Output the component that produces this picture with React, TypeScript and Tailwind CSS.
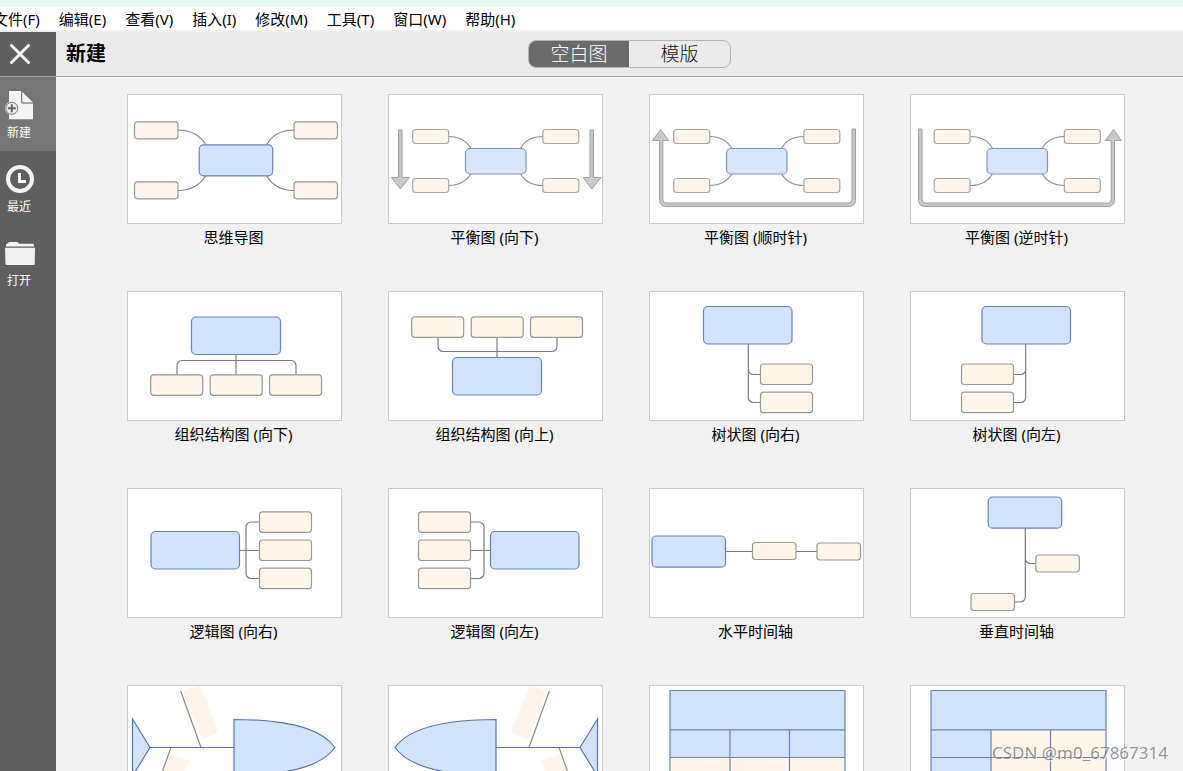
import { useState } from "react";
import type { ReactNode } from "react";

const menus = ["文件(F)", "编辑(E)", "查看(V)", "插入(I)", "修改(M)", "工具(T)", "窗口(W)", "帮助(H)"];

interface BoxProps {
  x: number;
  y: number;
  w?: number;
  h?: number;
}

// central topic
function Root({ x, y, w = 89, h = 38 }: BoxProps) {
  return <rect x={x} y={y} width={w} height={h} rx="4.500" fill="#d2e3fe" stroke="#6484bb" strokeWidth="1.200" />;
}

// sub topic
function Leaf({ x, y, w = 52, h = 20.5 }: BoxProps) {
  return <rect x={x} y={y} width={w} height={h} rx="3" fill="#fff5e8" stroke="#9a9894" strokeWidth="1.200" />;
}

function Wire({ d }: { d: string }) {
  return <path d={d} fill="none" stroke="#7c7c7c" strokeWidth="1.200" />;
}

function Flip({ children }: { children: ReactNode }) {
  return <g transform="translate(215 0) scale(-1 1)">{children}</g>;
}

function MindMap() {
  return (
    <>
      <Wire d="M51 36C64 36 73 41 79 51M167 36C154 36 145 41 139.500 51M51 96.500C64 96.500 73 91 79 81.500M167 96.500C154 96.500 145 91 139.500 81.500" />
      <Root x={72.2} y={50.800} w={73.5} h={31} />
      <Leaf x={7.5} y={27.800} w={43.5} h={17} />
      <Leaf x={167} y={27.800} w={43.5} h={17} />
      <Leaf x={7.5} y={87.800} w={43.5} h={17} />
      <Leaf x={167} y={87.800} w={43.5} h={17} />
    </>
  );
}

function BalancedNodes() {
  return (
    <g opacity="0.85">
      <Wire d="M60.500 42.500C71 42.500 78 46 83 54.500M155 42.500C144 42.500 137 46 132.500 54.500M60.500 91.500C71 91.500 78 88 83 79.500M155 91.500C144 91.500 137 88 132.500 79.500" />
      <Root x={77.5} y={54.5} w={60.5} h={25.500} />
      <Leaf x={24.700} y={35.5} w={36} h={14} />
      <Leaf x={154.800} y={35.5} w={36} h={14} />
      <Leaf x={24.700} y={84.5} w={36} h={14} />
      <Leaf x={154.800} y={84.5} w={36} h={14} />
    </g>
  );
}

function BalancedDown() {
  return (
    <>
      <BalancedNodes />
      <g fill="#c9c9c9" stroke="#a0a0a0">
        <path d="M10.500 36h3.500v47.500h7.500L12.300 95 3.500 83.500h7z" />
        <path d="M202 36h3.500v47.500h7.500L203.800 95 195 83.500h7z" />
      </g>
    </>
  );
}

function BalancedClockwise() {
  return (
    <>
      <BalancedNodes />
      <path
        d="M203 35h3.500v71.500a6 6 0 0 1-6 6h-184a6 6 0 0 1-6-6V46.500H3.500L11.600 35.500 19.800 46.500h-6v59a3.500 3.500 0 0 0 3.500 3.500h182.200a3.500 3.500 0 0 0 3.500-3.500z"
        fill="#c9c9c9"
        stroke="#a0a0a0"
      />
    </>
  );
}

function OrgDown() {
  return (
    <>
      <Wire d="M109 63.500V83.500M50 83.500V74.500a5 5 0 0 1 5-5H164a5 5 0 0 1 5 5V83.500" />
      <Root x={64.5} y={26} h={37.500} />
      <Leaf x={23.700} y={83.800} />
      <Leaf x={83.200} y={83.800} />
      <Leaf x={142.500} y={83.800} />
    </>
  );
}

function OrgUp() {
  return (
    <>
      <Wire d="M109 46V66.500M50 46V55.500a5 5 0 0 0 5 5H164a5 5 0 0 0 5-5V46" />
      <Root x={64.5} y={66.5} h={37.500} />
      <Leaf x={23.700} y={25.800} />
      <Leaf x={83.200} y={25.800} />
      <Leaf x={142.500} y={25.800} />
    </>
  );
}

function Tree() {
  return (
    <>
      <Wire d="M99.300 53V78.500a5 5 0 0 0 5 5H111.500M99.300 53V106.500a5 5 0 0 0 5 5H111.500" />
      <Root x={54.5} y={15.5} w={88.500} h={37.500} />
      <Leaf x={111.5} y={73} />
      <Leaf x={111.5} y={101.200} />
    </>
  );
}

function Logic() {
  return (
    <>
      <Wire d="M113 62.500H132M132 34H124a5 5 0 0 0-5 5V85.500a5 5 0 0 0 5 5H132" />
      <Root x={24} y={43.5} w={88.500} h={37.500} />
      <Leaf x={132.500} y={23.800} />
      <Leaf x={132.500} y={52} />
      <Leaf x={132.500} y={80.200} />
    </>
  );
}

function HorizontalTimeline() {
  return (
    <>
      <Wire d="M77 63.500H168" />
      <Root x={3} y={48} w={73.500} h={31.200} />
      <Leaf x={103.5} y={54.5} w={43.500} h={17} />
      <Leaf x={168} y={55} w={43.500} h={17} />
    </>
  );
}

function VerticalTimeline() {
  return (
    <>
      <Wire d="M115.300 40V70.500a5 5 0 0 0 5 5H125.500M115.300 40V109a5 5 0 0 1-5 5H104.500" />
      <Root x={78.200} y={9} w={73.500} h={31.200} />
      <Leaf x={125.800} y={67} w={43.500} h={17} />
      <Leaf x={61} y={105.5} w={43.500} h={17} />
    </>
  );
}

function Fishbone() {
  return (
    <>
      <path d="M56 6L73.500 0 92 47.500 75 54.500zM43 69L62 75.700 50 107 31 100z" fill="#fff5e8" />
      <path d="M53.700 6L74 62.500M44 62.500L28 107" fill="none" stroke="#8b8984" strokeWidth="1.200" />
      <g fill="#d2e3fe" stroke="#5876b0" strokeWidth="1.200">
        <path d="M23 62.500H107" />
        <path d="M107 34.500C158 34.500 194 43 208 62.500 194 82 158 90.500 107 90.500z" />
        <path d="M5.500 34L23 62.500 5.500 91z" />
      </g>
    </>
  );
}

function TableTop() {
  return <path d="M21 5.500H196V125H21z" fill="#d2e3fe" />;
}

function TableLines() {
  return (
    <path
      d="M21 5.500H196V125H21zM21 44.800H196M21 72.500H196M21 100H196M81 44.800V125M140.500 44.800V125"
      fill="none"
      stroke="#6684b8"
      strokeWidth="1.200"
      strokeLinejoin="round"
    />
  );
}

function TreeTable() {
  return (
    <>
      <TableTop />
      <path d="M21 72.500H196V125H21z" fill="#fff5e8" />
      <TableLines />
    </>
  );
}

function Matrix() {
  return (
    <>
      <TableTop />
      <path d="M81 44.800H196V125H81z" fill="#fff5e8" />
      <TableLines />
    </>
  );
}

interface Template {
  id: string;
  label: string;
  art: ReactNode;
}

const templates: Template[] = [
  { id: "mindmap", label: "思维导图", art: <MindMap /> },
  { id: "balanced-down", label: "平衡图 (向下)", art: <BalancedDown /> },
  { id: "balanced-cw", label: "平衡图 (顺时针)", art: <BalancedClockwise /> },
  { id: "balanced-ccw", label: "平衡图 (逆时针)", art: <Flip><BalancedClockwise /></Flip> },
  { id: "org-down", label: "组织结构图 (向下)", art: <OrgDown /> },
  { id: "org-up", label: "组织结构图 (向上)", art: <OrgUp /> },
  { id: "tree-right", label: "树状图 (向右)", art: <Tree /> },
  { id: "tree-left", label: "树状图 (向左)", art: <Flip><Tree /></Flip> },
  { id: "logic-right", label: "逻辑图 (向右)", art: <Logic /> },
  { id: "logic-left", label: "逻辑图 (向左)", art: <Flip><Logic /></Flip> },
  { id: "timeline-h", label: "水平时间轴", art: <HorizontalTimeline /> },
  { id: "timeline-v", label: "垂直时间轴", art: <VerticalTimeline /> },
  { id: "fish-right", label: "", art: <Fishbone /> },
  { id: "fish-left", label: "", art: <Flip><Fishbone /></Flip> },
  { id: "tree-table", label: "", art: <TreeTable /> },
  { id: "matrix", label: "", art: <Matrix /> },
];

function NewIcon() {
  return (
    <svg viewBox="0 0 30 30" className="size-[30px]">
      <path d="M4 1H16.500L28 12.500V29.300H4z" fill="#f4f4f4" />
      <path d="M16.700 1V13H28" fill="none" stroke="#5f5f5f" />
      <circle cx="6.800" cy="18.300" r="6.800" fill="#f4f4f4" />
      <circle cx="6.800" cy="18.300" r="6" fill="#ececec" stroke="#777" />
      <path d="M6.800 14.300v8M2.800 18.300h8" stroke="#666" strokeWidth="2" />
    </svg>
  );
}

function RecentIcon() {
  return (
    <svg viewBox="0 0 30 30" className="size-[30px]">
      <circle cx="15" cy="15" r="12" fill="none" stroke="#f4f4f4" strokeWidth="4" />
      <path d="M14.500 9V17.500H21" fill="none" stroke="#f4f4f4" strokeWidth="3" />
    </svg>
  );
}

function OpenIcon() {
  return (
    <svg viewBox="0 0 30 30" className="size-[30px]">
      <path d="M1 8.500V7Q1 5.500 2.500 5.500L3.500 4.500Q4 4 5 4H12Q13 4 13.500 5L14 5.700H27.500Q29 5.700 29 7.200V8.500z" fill="#f6f6f6" />
      <path d="M0 9.700H30L29.700 26Q29.700 27 28.700 27H1.500Q.500 27 .500 26z" fill="#f1f1f1" />
    </svg>
  );
}

const sideItems = [
  { id: "new", label: "新建", icon: <NewIcon /> },
  { id: "recent", label: "最近", icon: <RecentIcon /> },
  { id: "open", label: "打开", icon: <OpenIcon /> },
];

export default function App() {
  const [section, setSection] = useState("new");
  const [tab, setTab] = useState("blank");

  return (
    <div className="flex h-screen flex-col overflow-hidden bg-[#f1f1f1] font-['Noto_Sans','Noto_Sans_CJK_SC',sans-serif] text-[15px] text-black">
      <div className="h-[7px] shrink-0 bg-[#e6f7f4]" />

      <nav className="-ml-[7px] flex h-[25px] shrink-0 gap-[19px] border-b-2 border-[#f0f0f0] bg-white">
        {menus.map((m) => (
          <button key={m} className="whitespace-nowrap leading-6">
            {m}
          </button>
        ))}
      </nav>

      <div className="flex min-h-0 flex-1">
        <aside className="flex w-14 shrink-0 flex-col bg-[#5f5f5f]">
          <div className="h-[45px] shrink-0 border-b border-[#a0a0a0]">
            <button aria-label="关闭" className="flex h-full w-10 items-center justify-center">
              <svg viewBox="0 0 20 20" className="size-5">
                <path d="M1.500 1.500L18.500 18.500M18.500 1.500L1.500 18.500" stroke="#f4f4f4" strokeWidth="3" strokeLinecap="round" />
              </svg>
            </button>
          </div>
          {sideItems.map((item) => (
            <button
              key={item.id}
              onClick={() => setSection(item.id)}
              className={`h-[74px] shrink-0 ${section === item.id ? "bg-[#757575]" : ""}`}
            >
              <span className="flex h-full w-10 flex-col items-center gap-[5px] pt-[13px] text-xs leading-4 text-white">
                {item.icon}
                <span className="pr-0.5">{item.label}</span>
              </span>
            </button>
          ))}
        </aside>

        <main className="flex min-w-0 flex-1 flex-col">
          <header className="flex h-[45px] shrink-0 items-center border-b border-[#a0a0a0] bg-[#ebebeb]">
            <h1 className="w-[472px] pl-2.5 text-xl font-bold leading-7">新建</h1>
            <div className="flex h-7 overflow-hidden rounded-lg border border-[#b4b4b4] text-[19px] font-light leading-[26px] text-[#111]">
              <button
                onClick={() => setTab("blank")}
                className={`w-[100px] ${tab === "blank" ? "bg-[#6b6b6b] text-white" : ""}`}
              >
                空白图
              </button>
              <button
                onClick={() => setTab("template")}
                className={`w-[101px] ${tab === "template" ? "bg-[#6b6b6b] text-white" : ""}`}
              >
                模版
              </button>
            </div>
          </header>

          <div className="grid min-h-0 flex-1 auto-rows-max grid-cols-[repeat(auto-fill,215px)] gap-x-[46px] gap-y-11 overflow-hidden border-t border-white pl-[71px] pr-10 pt-4">
            {templates.map((t) => (
              <button key={t.id} className="flex flex-col items-center gap-[3px]">
                <svg viewBox="1 1 213 128" className="box-border h-[130px] w-[215px] border border-[#cacaca] bg-white">
                  {t.art}
                </svg>
                <span className="h-5 pr-0.5 leading-5">{t.label}</span>
              </button>
            ))}
          </div>
        </main>
      </div>

      <div className="pointer-events-none absolute bottom-1.5 right-[15px] font-['Noto_Sans',sans-serif] text-[17px] leading-6 text-[#666]/70 [text-shadow:1px_1px_1px_#fff]">
        CSDN @m0_67867314
      </div>
    </div>
  );
}
